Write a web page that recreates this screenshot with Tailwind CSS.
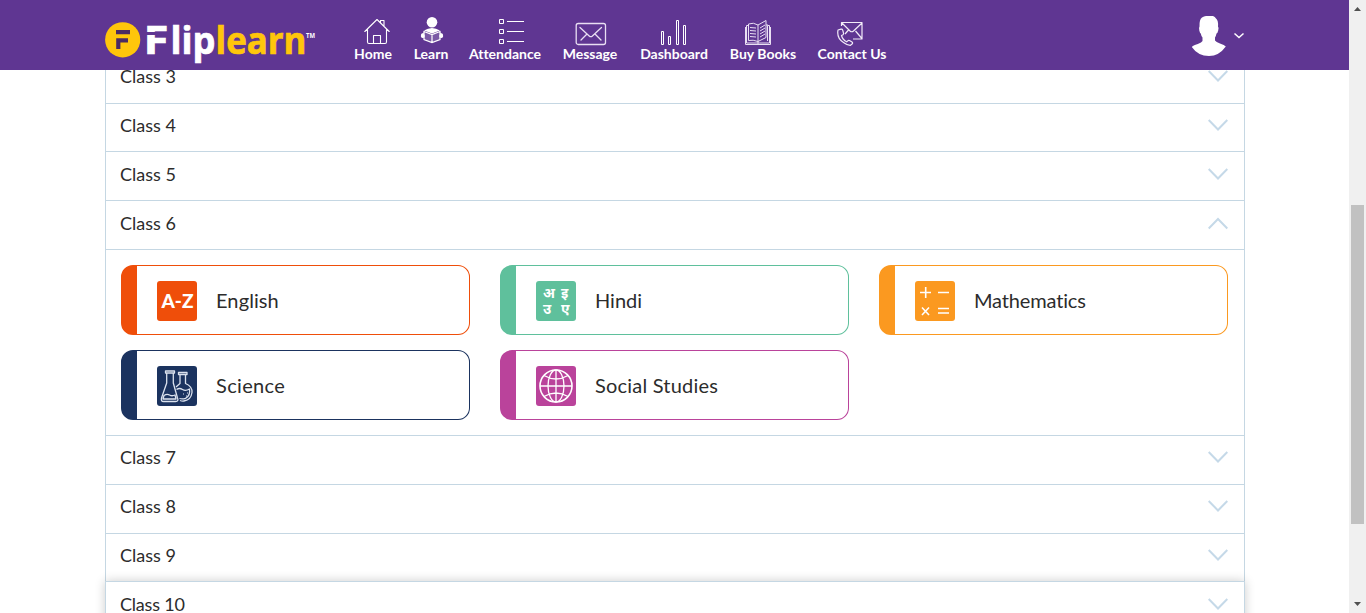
<!DOCTYPE html>
<html lang="en">
<head>
<meta charset="utf-8">
<title>Fliplearn</title>
<script src="https://cdn.jsdelivr.net/npm/@tailwindcss/browser@4"></script>
</head>
<body class="flex h-[613px] overflow-hidden bg-white font-['Lato',sans-serif] text-[#2c2c2c] [font-variant-ligatures:none]">
<div class="flex h-full w-[1349px] flex-col overflow-hidden">
  <header class="flex h-[70px] shrink-0 bg-[#5f3692] pl-[105px] text-white">
    <svg class="h-[70px] w-[220px] shrink-0" viewBox="105 0 220 70">
      <circle cx="122.700" cy="39.800" r="17.600" fill="#ffc60b"/>
      <path d="M116 32.200H130M118.300 49V40.300H128" fill="none" stroke="#4b2a63" stroke-width="4.200"/>
      <g font-family="Open Sans" font-weight="700">
        <text x="143.500" y="54" font-size="39" fill="#fff" stroke="#fff" stroke-width=".6" textLength="25" lengthAdjust="spacingAndGlyphs">F</text>
        <path d="M146 33.500H169" stroke="#5f3692" stroke-width="3"/>
        <text x="170.500" y="53.500" font-size="37" fill="#fff" stroke="#fff" stroke-width=".7" textLength="45" lengthAdjust="spacingAndGlyphs">lip</text>
        <text x="215.500" y="53.500" font-size="37" fill="#ffc60b" stroke="#ffc60b" stroke-width=".7" textLength="91" lengthAdjust="spacingAndGlyphs">learn</text>
        <text x="306" y="38" font-size="6.500" fill="#fff" textLength="9" lengthAdjust="spacingAndGlyphs">TM</text>
      </g>
    </svg>
    <nav class="flex pl-[29px] pt-[15px] text-[14px] font-bold leading-[14px] whitespace-nowrap">
      <a class="flex w-[38px] flex-col items-center"><svg class="ml-[7px] h-[32px] w-[26px]" viewBox="0 0 26 32" fill="none" stroke="#fff" stroke-width="1.100" stroke-linejoin="round" stroke-linecap="round"><path d="M.8 16.500L13 4.500l12.200 12M3.500 14.500V27q0 1.500 1.500 1.500h16q1.500 0 1.500-1.500V14.500M9.500 28.500v-8h7v8M16.500 7.500V5.500h3.500v5.500"/></svg><span>Home</span></a>
      <a class="ml-[21px] flex w-[36px] flex-col items-center"><svg class="ml-[1px] h-[32px] w-[26px]" viewBox="0 0 26 32"><circle cx="13" cy="7.300" r="5.300" fill="#fff"/><path d="M5 15.500q8-5 16 0l-8 3zM2 19l2 4.500 1-6zm22 0l-2 4.500-1-6z" fill="#fff"/><path d="M5 16.500l8 3 8-3v8l-8 3-8-3zM13 19.500v8" fill="#7a59a5" stroke="#fff" stroke-width="1.200"/><circle cx="3.800" cy="21" r="2" fill="#fff"/><circle cx="22.200" cy="21" r="2" fill="#fff"/></svg><span>Learn</span></a>
      <a class="ml-[20px] flex w-[72px] flex-col items-center"><svg class="ml-[12px] h-[32px] w-[26px]" viewBox="0 0 26 32" fill="none" stroke="#fff" stroke-width="1"><path d="M1.500 4.500h4v4h-4zM1.500 14.500h4v4h-4zM1.500 24.500h4v4h-4zM9 6.500h17M9 16.500h17M9 26.500h17"/></svg><span>Attendance</span></a>
      <a class="ml-[21px] flex w-[56px] flex-col items-center"><svg class="ml-[1px] h-[32px] w-[32px]" viewBox="0 0 32 32" fill="none" stroke="#e9dff3" stroke-width="1.300" stroke-linecap="round"><rect x="1.200" y="8.500" width="29.300" height="21" rx="2"/><path d="M5 12.500l9.200 8.400q1.600 1.400 3.200 0L26.500 12.500M6 25l6-6M26 25l-6-6"/></svg><span>Message</span></a>
      <a class="ml-[21px] flex w-[70px] flex-col items-center"><svg class="h-[32px] w-[28px]" viewBox="0 0 28 32" fill="none" stroke="#fff"><path d="M1.500 16.500h2v13h-2zM8.500 21.500h2v8h-2zM16.500 5.500h2v24h-2zM23.500 10.500h2v19h-2z"/></svg><span>Dashboard</span></a>
      <a class="ml-[20px] flex w-[68px] flex-col items-center"><svg class="ml-[-11px] h-[32px] w-[28px]" viewBox="0 0 28 32" fill="none" stroke="#e9dff3" stroke-width="1"><path d="M4.500 9q5-2 9.500 1v16.500q-5-2-9.500-1zM14 10l8-4.500v17L14 26.500M4.500 10.500h-2V28h23V10.500h-2V26M1.500 12v17.500h25V12M14 26.500V29M22 10h2M6 12.500l6 .5M6 15.500l6 .5M6 18.500l6 .5M6 21.500l6 .5M16 13l5-3M16 16l5-3M16 19l5-3M16 22l5-3"/></svg><span>Buy Books</span></a>
      <a class="ml-[20px] flex w-[70px] flex-col items-center"><svg class="ml-[-5px] h-[32px] w-[28px]" viewBox="0 0 28 32" fill="none" stroke="#f2ebf8" stroke-width="1.200" stroke-linejoin="round"><path d="M5.500 11V7.500h20.500v16.500H17M6 8l8 8q1.800 1.500 3.500 0L26 8M25.500 23l-6-7M9 19l3.500-4"/><path d="M2 15q-1.500 8 5.500 12.500 4 3 7 2.800l1.800-1.500q.7-1-.3-1.800l-2.500-1.500q-1-.5-1.800.3l-1 1q-4-1.800-5.200-6.300l1.500-.8q.8-.7.500-1.700l-.8-2.900q-.4-1.200-1.700-.9z"/></svg><span>Contact Us</span></a>
    </nav>
    <div class="ml-auto flex pr-[104px] pt-[15px]">
      <svg class="h-[42px] w-[36px]" viewBox="0 0 36 42"><path d="M11 2.500Q13 1 15 1h7q2 .5 3 2.500 2.500 2 2 8 1 1 .2 4-.5 2.500-1.700 3-.5 2.500-1.500 4v3q1 1.500 5 3 4.500 1.500 5.800 3Q28 41 18 41 7 41 .8 32q1-1.500 6-3 4-1.500 4.700-3v-3.500q-1.300-1.500-1.700-4-1-.5-1.500-3-.6-3 .2-4-.3-7 2.500-9z" fill="#fff"/></svg>
      <svg class="ml-[6px] mt-[15px] h-[12px] w-[12px]" viewBox="0 0 12 12" fill="none" stroke="#fff" stroke-width="1.500"><path d="M1.500 3.500L6 7.500l4.500-4"/></svg>
    </div>
  </header>

  <main class="ml-[105px] w-[1140px] grow text-[18px] leading-[22px]">
    <div class="flex h-[33px] justify-between border-x border-[#c5d7e3] pl-[14px] pr-[16px]"><span class="-mt-[5px]">Class 3</span><svg class="mt-[-1px] h-[14px] w-[20px]" viewBox="0 0 20 14" fill="none" stroke="#c5d9e8" stroke-width="2"><path d="M.7 2L10 11.500 19.300 2"/></svg></div>
    <div class="flex h-[48px] justify-between border-x border-t border-[#c5d7e3] pl-[14px] pr-[16px] pt-[10px]"><span>Class 4</span><svg class="mt-[4px] h-[14px] w-[20px]" viewBox="0 0 20 14" fill="none" stroke="#c5d9e8" stroke-width="2"><path d="M.7 2L10 11.500 19.300 2"/></svg></div>
    <div class="flex h-[49px] justify-between border-x border-t border-[#c5d7e3] pl-[14px] pr-[16px] pt-[11px]"><span>Class 5</span><svg class="mt-[4px] h-[14px] w-[20px]" viewBox="0 0 20 14" fill="none" stroke="#c5d9e8" stroke-width="2"><path d="M.7 2L10 11.500 19.300 2"/></svg></div>
    <div class="flex h-[49px] justify-between border-x border-t border-[#c5d7e3] pl-[14px] pr-[16px] pt-[11px]"><span>Class 6</span><svg class="mt-[4px] h-[14px] w-[20px]" viewBox="0 0 20 14" fill="none" stroke="#c5d9e8" stroke-width="2"><path d="M.7 12.500L10 3 19.300 12.500"/></svg></div>
    <section class="grid h-[186px] grid-cols-3 grid-rows-[70px_70px] gap-x-[30px] gap-y-[15px] border-x border-t border-[#c5d7e3] pl-[15px] pr-[16px] pt-[15px] text-[20px]">
      <div class="flex items-center rounded-[12px] border border-l-[16px] border-[#ef4e0a] pl-[20px]">
        <svg class="mt-[2px] h-10 w-10" viewBox="0 0 40 40"><rect width="40" height="40" rx="3" fill="#ef4e0a"/><text x="4.500" y="27" font-family="Lato" font-weight="900" font-size="19" fill="#fff" textLength="32" lengthAdjust="spacingAndGlyphs">A-Z</text></svg>
        <span class="ml-[19px] tracking-[0.1px]">English</span>
      </div>
      <div class="flex items-center rounded-[12px] border border-l-[16px] border-[#5fc09c] pl-[20px]">
        <svg class="mt-[2px] h-10 w-10" viewBox="0 0 40 40" fill="#fff" font-family="Noto Sans Devanagari, Noto Sans, sans-serif" font-weight="700" font-size="14"><rect width="40" height="40" rx="3" fill="#5fc09c"/><text x="7" y="17">अ</text><text x="25" y="17">इ</text><text x="7" y="33">उ</text><text x="25" y="33">ए</text></svg>
        <span class="ml-[19px]">Hindi</span>
      </div>
      <div class="flex items-center rounded-[12px] border border-l-[16px] border-[#fb9920] pl-[20px]">
        <svg class="mt-[2px] h-10 w-10" viewBox="0 0 40 40" fill="none" stroke="#fff" stroke-width="1.600"><rect width="40" height="40" rx="3" fill="#fb9920" stroke="none"/><path d="M5 11.500h11M10.700 6v11M23 11.500h11M7 26.500l7 7.500M14 26.500l-7 7.500M23 27.500h11M23 32h11"/></svg>
        <span class="ml-[19px] tracking-[-0.15px]">Mathematics</span>
      </div>
      <div class="flex items-center rounded-[12px] border border-l-[16px] border-[#1b335f] pl-[20px]">
        <svg class="mt-[2px] h-10 w-10" viewBox="0 0 40 40" fill="none" stroke="#dbe2ee" stroke-width="1.300" stroke-linejoin="round"><rect width="40" height="40" rx="3" fill="#1b335f" stroke="none"/><path d="M8.500 5h9v2h-9zM9.700 7v10L4.500 32q-.8 3.500 2 3.500h12q3.500-.3 2-3.500L16.300 17V7M7 29.500q3-2 5.500-.5t5.500 0l1 4H6z"/><path d="M21.500 6.500h8.500V8.500h-8.500zM23 8.500v9L19 21M28.500 8.500v9q7 3 6.500 9-1 7.500-8 8.500-2 .3-4-.5M19.500 23.500q3-2 6 0t7-.5q1 7-4 9.300-3 1.200-6 .2"/><path d="M26 28h1M29 30h1M30 27h1" stroke-width="1"/></svg>
        <span class="ml-[19px] tracking-[0.35px]">Science</span>
      </div>
      <div class="flex items-center rounded-[12px] border border-l-[16px] border-[#ba439b] pl-[20px]">
        <svg class="mt-[2px] h-10 w-10" viewBox="0 0 40 40" fill="none" stroke="#fff" stroke-width="1.300"><rect width="40" height="40" rx="3" fill="#ba439b" stroke="none"/><circle cx="20" cy="20" r="16" stroke-width="1.600"/><ellipse cx="20" cy="20" rx="8" ry="16"/><path d="M20 4v32M4 20h32M8 9.500q12 7 24 0M8 30.500q12-7 24 0"/></svg>
        <span class="ml-[19px] tracking-[0.2px]">Social Studies</span>
      </div>
    </section>
    <div class="flex h-[49px] justify-between border-x border-t border-[#c5d7e3] pl-[14px] pr-[16px] pt-[10px]"><span>Class 7</span><svg class="mt-[4px] h-[14px] w-[20px]" viewBox="0 0 20 14" fill="none" stroke="#c5d9e8" stroke-width="2"><path d="M.7 2L10 11.500 19.300 2"/></svg></div>
    <div class="flex h-[49px] justify-between border-x border-t border-[#c5d7e3] pl-[14px] pr-[16px] pt-[10px]"><span>Class 8</span><svg class="mt-[4px] h-[14px] w-[20px]" viewBox="0 0 20 14" fill="none" stroke="#c5d9e8" stroke-width="2"><path d="M.7 2L10 11.500 19.300 2"/></svg></div>
    <div class="flex h-[48px] justify-between border-x border-t border-[#c5d7e3] pl-[14px] pr-[16px] pt-[10px]"><span>Class 9</span><svg class="mt-[4px] h-[14px] w-[20px]" viewBox="0 0 20 14" fill="none" stroke="#c5d9e8" stroke-width="2"><path d="M.7 2L10 11.500 19.300 2"/></svg></div>
    <div class="flex h-[49px] justify-between border-x border-t border-[#c5d7e3] bg-white pl-[14px] pr-[16px] pt-[11px] shadow-[0_0_10px_rgba(0,0,0,0.2)]"><span class="tracking-[-0.2px]">Class 10</span><svg class="mt-[4px] h-[14px] w-[20px]" viewBox="0 0 20 14" fill="none" stroke="#c5d9e8" stroke-width="2"><path d="M.7 2L10 11.500 19.300 2"/></svg></div>
  </main>
</div>
<aside class="flex h-full w-[17px] flex-col items-center bg-[#f0f0f0]">
  <svg class="mt-[7px] h-[4px] w-[7px]" viewBox="0 0 7 4"><path d="M0 4L3.500 0 7 4z" fill="#505050"/></svg>
  <div class="mt-[194px] h-[319px] w-[13px] bg-[#c1c1c1]"></div>
  <svg class="mt-[78px] h-[4px] w-[7px]" viewBox="0 0 7 4"><path d="M0 0L3.500 4 7 0z" fill="#505050"/></svg>
</aside>
</body>
</html>
